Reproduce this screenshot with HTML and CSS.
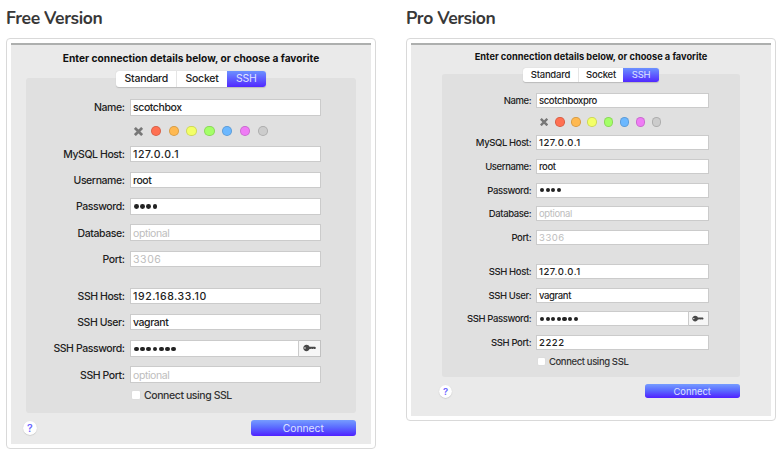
FILE: index.html
```
<!DOCTYPE html>
<html lang="en">
<head>
<meta charset="utf-8">
<title>Connection settings</title>
<link rel="stylesheet" href="styles.css">
</head>
<body>
<svg class="defs" width="0" height="0">
  <symbol id="key" viewBox="0 0 13 8"><path fill="#484848" fill-rule="evenodd" d="M3.5.7C5 .7 6.2 1.5 6.5 2.7H12l.8.9v.8l-.8.7h-1l-.6-.5-.7.5h-.8l-.7-.5-.6.5H6.5C6.2 6.300 5 7.200 3.500 7.200 1.700 7.200.3 5.800.3 4S1.700.7 3.500.7ZM2 3.200a.8.8 0 1 0 0 1.600.8.8 0 0 0 0-1.600Z"/></symbol>
  <symbol id="cross" viewBox="0 0 8 8"><path stroke="#777" stroke-width="2.400" d="M.8.8l6.400 6.400M7.200.8L.8 7.200"/></symbol>
</svg>
<main class="versions">
  <section class="version free">
    <h2>Free Version</h2>
    <div class="frame"><div class="window">
      <p class="intro">Enter connection details below, or choose a favorite</p>
      <div class="tabs"><span class="tab standard">Standard</span><span class="tab socket">Socket</span><span class="tab active">SSH</span></div>
      <div class="panel">
        <div class="row"><label>Name:</label><div class="field">scotchbox</div></div>
        <div class="swatches"><svg class="cross"><use href="#cross"/></svg><i class="red"></i><i class="orange"></i><i class="yellow"></i><i class="green"></i><i class="blue"></i><i class="pink"></i><i class="gray"></i></div>
        <div class="row"><label>MySQL Host:</label><div class="field num">127.0.0.1</div></div>
        <div class="row"><label>Username:</label><div class="field">root</div></div>
        <div class="row"><label>Password:</label><div class="field dots"><b></b><b></b><b></b><b></b></div></div>
        <div class="row"><label>Database:</label><div class="field empty">optional</div></div>
        <div class="row last"><label>Port:</label><div class="field empty num">3306</div></div>
        <div class="row"><label>SSH Host:</label><div class="field num">192.168.33.10</div></div>
        <div class="row"><label>SSH User:</label><div class="field">vagrant</div></div>
        <div class="row"><label>SSH Password:</label><div class="field dots keyed"><b></b><b></b><b></b><b></b><b></b><b></b><b></b></div><span class="key"><svg><use href="#key"/></svg></span></div>
        <div class="row"><label>SSH Port:</label><div class="field empty">optional</div></div>
        <div class="ssl"><span class="box"></span><span>Connect using SSL</span></div>
      </div>
      <div class="actions"><span class="help">?</span><span class="connect">Connect</span></div>
    </div></div>
  </section>
  <section class="version pro">
    <h2>Pro Version</h2>
    <div class="frame"><div class="window">
      <p class="intro">Enter connection details below, or choose a favorite</p>
      <div class="tabs"><span class="tab standard">Standard</span><span class="tab socket">Socket</span><span class="tab active">SSH</span></div>
      <div class="panel">
        <div class="row"><label>Name:</label><div class="field">scotchboxpro</div></div>
        <div class="swatches"><svg class="cross"><use href="#cross"/></svg><i class="red"></i><i class="orange"></i><i class="yellow"></i><i class="green"></i><i class="blue"></i><i class="pink"></i><i class="gray"></i></div>
        <div class="row"><label>MySQL Host:</label><div class="field num">127.0.0.1</div></div>
        <div class="row"><label>Username:</label><div class="field">root</div></div>
        <div class="row"><label>Password:</label><div class="field dots"><b></b><b></b><b></b><b></b></div></div>
        <div class="row"><label>Database:</label><div class="field empty">optional</div></div>
        <div class="row last"><label>Port:</label><div class="field empty num">3306</div></div>
        <div class="row"><label>SSH Host:</label><div class="field num">127.0.0.1</div></div>
        <div class="row"><label>SSH User:</label><div class="field">vagrant</div></div>
        <div class="row"><label>SSH Password:</label><div class="field dots keyed"><b></b><b></b><b></b><b></b><b></b><b></b><b></b></div><span class="key"><svg><use href="#key"/></svg></span></div>
        <div class="row"><label>SSH Port:</label><div class="field num">2222</div></div>
        <div class="ssl"><span class="box"></span><span>Connect using SSL</span></div>
      </div>
      <div class="actions"><span class="help">?</span><span class="connect">Connect</span></div>
    </div></div>
  </section>
</main>
</body>
</html>
```
FILE: styles.css
```
* { box-sizing: border-box; }
body { margin: 0; background: #fff; color: #222; font-family: Inter, "Liberation Sans", sans-serif; overflow: hidden; }
.defs { display: block; }
.versions { display: flex; gap: 30px; align-items: flex-start; padding: 0 0 0 6px; }
.version { width: 370px; flex: none; }
h2 { margin: 0; height: 38px; padding-top: 7px; font: 700 17.5px/22px Nunito, Lato, sans-serif; letter-spacing: -.4px; color: #383838; white-space: nowrap; }
.frame { border: 1px solid #d9d9d9; border-radius: 4px; padding: 4px; background: #fff; }

/* All window measurements are multiplied by --u */
.free { --u: 1px; --side: 15px; --height: 401px; --nudge: 1px; --intro: 26px; }
.pro { --u: .906px; --side: 31px; --height: 373px; --nudge: 0px; --intro: 22.700px; }
.window { height: var(--height); padding: 0 var(--side); background: #eaeaea; border-top: 2px solid #adafae; font-size: calc(10.5 * var(--u)); font-weight: 500; letter-spacing: -.04em; white-space: nowrap; }
.intro { margin: 0; height: var(--intro); display: flex; align-items: center; justify-content: center; letter-spacing: 0; font-weight: 700; color: #111; font-size: calc(10.2 * var(--u)); }
.tabs { position: relative; display: flex; width: calc(149.500 * var(--u)); height: calc(15.500 * var(--u)); margin: 0 auto; border-radius: calc(3 * var(--u)); background: #fff; box-shadow: 0 .5px 1px #bbb; overflow: hidden; color: #222; }
.tab { display: flex; align-items: center; justify-content: center; letter-spacing: -.025em; }
.standard { width: calc(61 * var(--u)); border-right: 1px solid #e5e5e5; }
.socket { width: calc(49.500 * var(--u)); }
.active { flex: 1; color: #dfe2ff; font-weight: 400; background: linear-gradient(#6b91ff, #5128ff); }
.panel { margin-top: calc(-8.500 * var(--u)); height: calc(334.500 * var(--u)); padding-top: calc(21 * var(--u)); background: #e0e0e0; border-radius: calc(3 * var(--u)); }
.row { display: flex; height: calc(16.500 * var(--u)); margin-bottom: calc(9.750 * var(--u)); align-items: center; }
.row:first-child { margin-bottom: 0; }
.row.last { margin-bottom: calc(20.700 * var(--u)); }
.row label { width: calc(98.500 * var(--u)); margin-right: calc(5.500 * var(--u)); text-align: right; padding-top: var(--nudge); }
.field { width: calc(190.500 * var(--u)); height: 100%; display: flex; align-items: center; padding: var(--nudge) 0 0 calc(2 * var(--u)); background: #fff; border: 1px solid #cbcbcb; }
.num { letter-spacing: .055em; }
.empty { color: #bdbdbd; font-weight: 400; }
.dots { gap: calc(1.400 * var(--u)); padding-left: calc(3 * var(--u)); }
.dots b { width: calc(4.800 * var(--u)); height: calc(4.800 * var(--u)); border-radius: 50%; background: #222; }
.keyed { width: calc(168.500 * var(--u)); }
.key { width: calc(22 * var(--u)); height: 100%; display: flex; align-items: center; justify-content: center; background: #f6f6f6; border: 1px solid #c1c1c1; border-left: 0; }
.key svg { width: calc(13 * var(--u)); height: calc(8 * var(--u)); }
.swatches { height: calc(30 * var(--u)); display: flex; align-items: center; gap: calc(7.400 * var(--u)); padding: calc(1 * var(--u)) 0 0 calc(108 * var(--u)); }
.cross { width: calc(9 * var(--u)); height: calc(9 * var(--u)); margin-right: calc(.500 * var(--u)); }
.swatches i { width: calc(10.400 * var(--u)); height: calc(10.400 * var(--u)); border-radius: 50%; border: 1px solid rgba(0, 0, 0, .15); }
.red { background: #ff7052; }
.orange { background: #ffb951; }
.yellow { background: #f3ff67; }
.green { background: #a4ff68; }
.blue { background: #6cb8ff; }
.pink { background: #ef7cf5; }
.gray { background: #ccc; }
.ssl { display: flex; align-items: center; gap: calc(3.500 * var(--u)); height: calc(10 * var(--u)); margin-top: calc(-2.300 * var(--u)); padding-left: calc(104.500 * var(--u)); color: #333; }
.box { width: calc(10 * var(--u)); height: calc(10 * var(--u)); background: #fff; border: 1px solid #ddd; border-radius: 2px; }
.actions { display: flex; align-items: center; justify-content: space-between; margin-top: calc(7.500 * var(--u)); }
.help { width: calc(14.500 * var(--u)); height: calc(14.500 * var(--u)); margin-left: calc(-3.500 * var(--u)); border-radius: 50%; display: flex; align-items: center; justify-content: center; background: #fff; color: #6d67ff; font-weight: 600; box-shadow: 0 .5px 1px #bbb; }
.connect { width: calc(104.500 * var(--u)); margin-right: .5px; letter-spacing: 0; font-weight: 400; font-size: calc(10.300 * var(--u)); height: calc(16 * var(--u)); display: flex; align-items: center; justify-content: center; color: #dfe2ff; border-radius: calc(3 * var(--u)); background: linear-gradient(#769cff, #5b6cff 45%, #4f20ff); }
```
